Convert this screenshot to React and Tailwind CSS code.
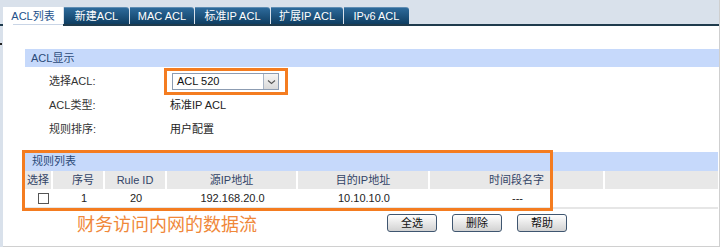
/**
 * ACL list page – tabs, ACL display block, rule table.
 */

const tabs = [
  { label: "新建ACL", w: "w-[65px]" },
  { label: "MAC ACL", w: "w-[64px]" },
  { label: "标准IP ACL", w: "w-[75px]" },
  { label: "扩展IP ACL", w: "w-[72px]" },
  { label: "IPv6 ACL", w: "w-[65px]" },
];

const cols = [
  { label: "选择", w: "w-[28px]" },
  { label: "序号", w: "w-[52px] pl-[10px]" },
  { label: "Rule ID", w: "w-[62px]" },
  { label: "源IP地址", w: "w-[131px]" },
  { label: "目的IP地址", w: "w-[132px]" },
  { label: "时间段名字", w: "w-[175px]" },
  { label: "", w: "flex-1" },
];

function Btn({ children }) {
  return (
    <button className="w-[50px] h-[18px] border border-[#3f5670] rounded-[3px] bg-linear-to-b from-white to-[#d2d2d2] text-[11px] leading-[16px] text-[#111]">
      {children}
    </button>
  );
}

export default function App() {
  return (
    <div className="relative w-[720px] h-[247px] overflow-hidden bg-[#d9e1eb] border-r border-[#cfcfcf] flex flex-col font-['Liberation_Sans','Noto_Sans_CJK_SC',sans-serif] text-[11px] text-[#333]">
      {/* ── Tabs ─────────────────────────────── */}
      <div className="h-[24px] flex items-end pl-[3px] gap-[1px]">
        <div className="relative z-10 w-[60px] h-[19px] -mb-[2px] bg-white flex flex-col items-center justify-center">
          <span className="text-[#23508a] leading-[14px]">ACL列表</span>
          <div className="self-end w-[50px] h-[1px] bg-[#c9d5e6] mt-[1px]" />
        </div>
        {tabs.map((t) => (
          <div
            key={t.label}
            className={`${t.w} h-[17px] bg-linear-to-b from-[#2d6a9b] to-[#0f3e62] rounded-tr-[3px] border-t border-[#5f8db3] text-white flex items-center justify-center leading-none`}
          >
            {t.label}
          </div>
        ))}
      </div>
      <div className="h-[2px] bg-[#1f3b4d]" />

      {/* ── Content panel ────────────────────── */}
      <div className="ml-[3px] flex-1 bg-white border-b border-[#d0d0d0] flex flex-col">
        {/* ACL显示 */}
        <div className="ml-[22px] mt-[23px]">
          <div className="h-[18px] bg-[#c6d9fb] pl-[6px] leading-[18px] text-[#2b4a78]">ACL显示</div>
          <div className="pl-[24px]">
            <div className="h-[29px] flex items-center">
              <span className="w-[115px]">选择ACL:</span>
              <div className="w-[124px] h-[27px] border-[3px] border-[#f47c20] flex items-center pl-[5px]">
                <div className="w-[107px] h-[17px] border border-[#8c9cb2] flex items-center">
                  <span className="flex-1 pl-[4px] text-[#111]">ACL 520</span>
                  <div className="w-[15px] h-[15px] border-l border-[#a8b4c4] bg-linear-to-b from-[#f6f6f6] to-[#d9d9d9] flex items-center justify-center">
                    <svg width="9" height="6" viewBox="0 0 9 6">
                      <path d="M1 1.5 L4.5 4.5 L8 1.5" fill="none" stroke="#555" strokeWidth="1.1" />
                    </svg>
                  </div>
                </div>
              </div>
            </div>
            <div className="h-[19px] flex items-center">
              <span className="w-[121px]">ACL类型:</span>
              <span className="text-[#222]">标准IP ACL</span>
            </div>
            <div className="h-[19px] mt-[5px] flex items-center">
              <span className="w-[121px]">规则排序:</span>
              <span className="text-[#222]">用户配置</span>
            </div>
          </div>
        </div>

        {/* 规则列表 */}
        <div className="ml-[22px] mr-[1px] mt-[13px]">
          <div className="h-[19px] bg-[#c6d9fb] pl-[7px] leading-[19px] text-[#2b4a78]">规则列表</div>
          <div className="h-[18px] flex bg-[#e8e8e8] text-[#334466]">
            {cols.map((c, i) => (
              <div
                key={i}
                className={`${c.w} ${i < cols.length - 1 ? "border-r-2 border-white" : ""} flex items-center justify-center`}
              >
                {c.label}
              </div>
            ))}
          </div>
          <div className="h-[20px] flex border-b-2 border-[#e6e6e6] text-[#222]">
            <div className="w-[28px] flex items-center justify-center">
              <div className="w-[11px] h-[11px] border border-[#555] bg-white ml-[8px]" />
            </div>
            <div className="w-[52px] pl-[10px] flex items-center justify-center">1</div>
            <div className="w-[62px] flex items-center justify-center">20</div>
            <div className="w-[131px] flex items-center justify-center">192.168.20.0</div>
            <div className="w-[132px] flex items-center justify-center">10.10.10.0</div>
            <div className="w-[175px] flex items-center justify-center">---</div>
            <div className="flex-1" />
          </div>

          {/* footer: caption + buttons */}
          <div className="flex items-start mt-[5px] pl-[52px]">
            <span className="w-[310px] text-[18px] leading-[20px] mt-[1px] text-[#f0883a]">财务访问内网的数据流</span>
            <div className="flex gap-[15px]">
              <Btn>全选</Btn>
              <Btn>删除</Btn>
              <Btn>帮助</Btn>
            </div>
          </div>
        </div>
      </div>

      {/* ── Annotation overlay ───────────────── */}
      <div className="absolute left-[22px] top-[150px] w-[531px] h-[61px] border-[3px] border-[#f47c20] pointer-events-none" />
      <div className="absolute left-0 top-[43px] w-[2px] h-[2px] bg-[#222]" />
    </div>
  );
}
